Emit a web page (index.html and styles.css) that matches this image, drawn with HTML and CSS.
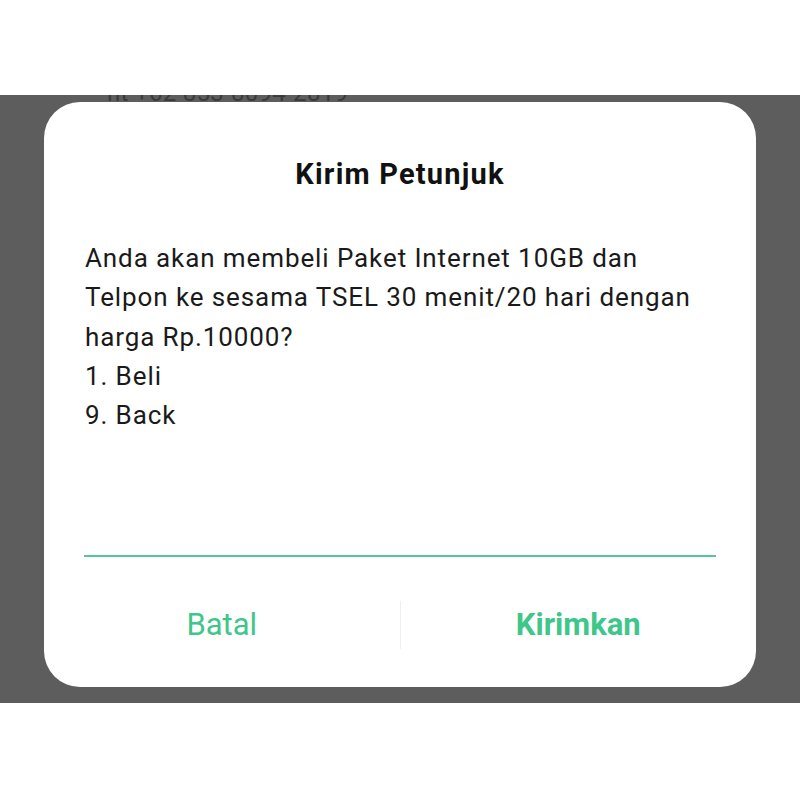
FILE: index.html
```html
<!DOCTYPE html>
<html lang="id">
<head>
    <meta charset="UTF-8">
    <meta name="viewport" content="width=device-width, initial-scale=1.0">
    <title>Kirim Petunjuk</title>
    <link rel="stylesheet" href="styles.css">
</head>
<body>
    <div class="status-gap"></div>

    <div class="scrim">
        <!-- contact line of the screen below, mostly hidden by the dialog -->
        <div class="peek">
            <span class="peek-text">nt +62 853-8094-2819</span>
        </div>

        <div class="dialog">
            <h2 class="dialog-title">Kirim Petunjuk</h2>

            <div class="dialog-body">
                <p class="ussd-text">
                    Anda akan membeli Paket Internet 10GB dan<br>
                    Telpon ke sesama TSEL 30 menit/20 hari dengan<br>
                    harga Rp.10000?<br>
                    1. Beli<br>
                    9. Back
                </p>
                <div class="reply-field"></div>
            </div>

            <div class="dialog-actions">
                <button type="button" class="action-btn">Batal</button>
                <button type="button" class="action-btn primary">Kirimkan</button>
            </div>
        </div>
    </div>
</body>
</html>
```

FILE: styles.css
```css
* {
    margin: 0;
    padding: 0;
    box-sizing: border-box;
}

body {
    font-family: Roboto, 'Noto Sans', sans-serif;
    background: #ffffff;
    color: #1c1c1c;
    width: 800px;
    height: 800px;
    overflow: hidden;
}

.status-gap {
    height: 95px;
}

.scrim {
    height: 608px;
    background: #5c5d5c;
    overflow: hidden;
}

.peek {
    height: 7px;
    overflow: hidden;
    padding-left: 107px;
}

.peek-text {
    display: block;
    margin-top: -14px;
    font-size: 24px;
    line-height: 24px;
    letter-spacing: 0.3px;
    color: #3a3a3a;
    white-space: nowrap;
}

.dialog {
    margin: 0 44px;
    height: 585px;
    background: #ffffff;
    border-radius: 36px;
    padding-top: 54px;
    display: flex;
    flex-direction: column;
}

.dialog-title {
    font-size: 29px;
    line-height: 36px;
    font-weight: 700;
    letter-spacing: 1.2px;
    text-align: center;
    color: #111111;
}

.dialog-body {
    padding: 0 40px 0 41px;
}

.ussd-text {
    margin-top: 47px;
    font-size: 26px;
    line-height: 39.3px;
    letter-spacing: 0.9px;
    color: #1a1a1a;
}

.reply-field {
    margin-top: 120px;
    margin-left: -1px;
    height: 2px;
    background: #52c894;
}

.dialog-actions {
    flex: 1;
    display: flex;
    align-items: center;
    padding-top: 5px;
}

.action-btn {
    flex: 1;
    height: 48px;
    border: none;
    background: none;
    font-family: Roboto, 'Noto Sans', sans-serif;
    font-size: 31px;
    color: #3fc68a;
    cursor: pointer;
}

.action-btn.primary {
    font-weight: 700;
    border-left: 1px solid #efefef;
}
```
